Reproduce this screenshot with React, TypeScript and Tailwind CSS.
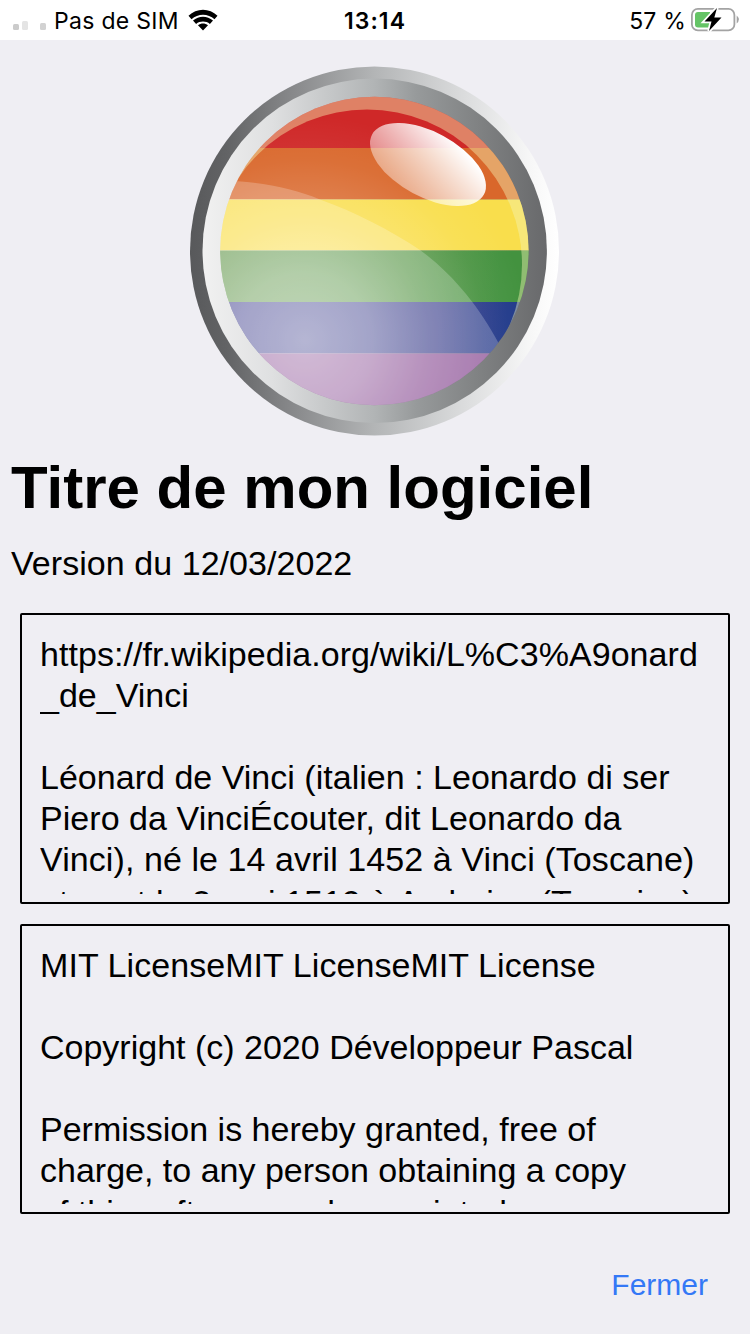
import React from "react";

function Line({ children, className = "" }: { children?: React.ReactNode; className?: string }) {
  return <div className={`h-[41px] whitespace-pre leading-[41px] ${className}`}>{children}</div>;
}

function Logo() {
  return (
    <svg width="372" height="372" viewBox="188 65 372 372" className="block">
      <defs>
        <linearGradient id="outer" x1="0" x2="1" y1="0" y2="0">
          <stop offset="0" stopColor="#58595b" />
          <stop offset="0.1" stopColor="#626365" />
          <stop offset="0.25" stopColor="#828385" />
          <stop offset="0.5" stopColor="#b3b5b6" />
          <stop offset="0.75" stopColor="#dcddde" />
          <stop offset="0.93" stopColor="#f8f8f8" />
          <stop offset="1" stopColor="#ffffff" />
        </linearGradient>
        <linearGradient id="inner" x1="0" x2="1" y1="0" y2="0">
          <stop offset="0" stopColor="#f1f1f1" />
          <stop offset="0.2" stopColor="#dfe0e1" />
          <stop offset="0.5" stopColor="#b1b4b5" />
          <stop offset="0.62" stopColor="#979a9b" />
          <stop offset="0.8" stopColor="#808283" />
          <stop offset="1" stopColor="#68696b" />
        </linearGradient>
        <linearGradient id="green" x1="0" x2="1" y1="0" y2="0">
          <stop offset="0" stopColor="#679a50" />
          <stop offset="0.6" stopColor="#569645" />
          <stop offset="0.9" stopColor="#43923f" />
        </linearGradient>
        <linearGradient id="blue" x1="0" x2="1" y1="0" y2="0">
          <stop offset="0" stopColor="#41408f" />
          <stop offset="0.7" stopColor="#3b3f8c" />
          <stop offset="0.92" stopColor="#213a8a" />
        </linearGradient>
        <radialGradient id="glow" gradientUnits="userSpaceOnUse" cx="305" cy="340" r="225">
          <stop offset="0" stopColor="#fff" stopOpacity="0.51" />
          <stop offset="0.3" stopColor="#fff" stopOpacity="0.39" />
          <stop offset="0.55" stopColor="#fff" stopOpacity="0.2" />
          <stop offset="0.8" stopColor="#fff" stopOpacity="0.06" />
          <stop offset="1" stopColor="#fff" stopOpacity="0" />
        </radialGradient>
        <linearGradient id="shine" gradientUnits="userSpaceOnUse" x1="440" y1="130" x2="415" y2="200">
          <stop offset="0" stopColor="#fff" />
          <stop offset="1" stopColor="#fff" stopOpacity="0.4" />
        </linearGradient>
        <clipPath id="disc"><circle cx="374.4" cy="251" r="154.2" /></clipPath>
        <mask id="rim">
          <rect x="188" y="65" width="372" height="372" fill="#fff" />
          <circle cx="367" cy="264.5" r="155" fill="#000" />
        </mask>
      </defs>
      <circle cx="374.5" cy="251" r="184.5" fill="url(#outer)" />
      <circle cx="374.7" cy="250.8" r="172.2" fill="url(#inner)" />
      <g clipPath="url(#disc)">
        <rect x="218" y="95" width="314" height="53" fill="#cf2828" />
        <rect x="218" y="148" width="314" height="51.5" fill="#d9672b" />
        <rect x="218" y="199.5" width="314" height="51" fill="#f9de4c" />
        <rect x="218" y="250.5" width="314" height="51.5" fill="url(#green)" />
        <rect x="218" y="302" width="314" height="51.5" fill="url(#blue)" />
        <rect x="218" y="353.5" width="314" height="53" fill="#8b4f95" />
        <circle cx="305" cy="340" r="225" fill="url(#glow)" />
        <path d="M210 180 C250 180 290 187 320 199.500 C355 212 390 230 420 250 C452 273 480 308 498 342 L500 440 L200 440 Z" fill="#fff" fillOpacity="0.22" />
        <rect x="218" y="95" width="314" height="314" fill="#f3f3b4" fillOpacity="0.44" mask="url(#rim)" />
      </g>
      <ellipse cx="428" cy="164.500" rx="63.500" ry="32.400" transform="rotate(28.300 428 164.500)" fill="url(#shine)" />
    </svg>
  );
}

export default function App() {
  return (
    <div className="flex h-[1334px] w-[750px] flex-col overflow-hidden bg-[#efeef3] font-['Liberation_Sans',Arial,sans-serif] text-black">
      <header className="grid h-10 shrink-0 grid-cols-3 items-center bg-white font-['Inter',sans-serif] text-[23px]">
        <div className="flex items-center pl-[13px]">
          <svg width="34" height="40" viewBox="0 0 34 40">
            <rect x="0" y="24" width="6" height="6" rx="1.500" fill="#cbcbcb" />
            <rect x="9" y="21" width="6" height="9" rx="1.500" fill="#e4e4e4" />
            <rect x="27" y="23" width="6" height="7" rx="1.500" fill="#d2d2d2" />
          </svg>
          <span className="ml-[7px] whitespace-nowrap pt-[2px] tracking-[0.3px]">Pas de SIM</span>
          <svg width="30" height="22" viewBox="0 0 30 22" className="ml-[9px]">
            <path d="M0.500 6.800 C8.500 -1.200 21.500 -1.200 29.500 6.800 L26.500 10.200 C20 4.200 10 4.200 3.500 10.200 Z M5 11.500 C10.700 6.400 19.300 6.400 25 11.500 L21.900 14.900 C18 11.700 12 11.700 8.100 14.900 Z M10 16.300 C13 13.900 17 13.900 20 16.300 L15 21.500 Z" />
          </svg>
        </div>
        <div className="pt-[2px] text-center font-semibold tracking-[1.1px]">13:14</div>
        <div className="flex items-center justify-end pr-[11px]">
          <span className="whitespace-nowrap pt-[2px] tracking-[0.2px]">57 %</span>
          <svg width="49" height="28" viewBox="690 6 49 28" className="ml-[4px]">
            <rect x="691.900" y="8.900" width="42.500" height="21.500" rx="6" fill="none" stroke="#a3a3a3" strokeWidth="1.800" />
            <path d="M698 12 H710 V27.500 H698 Q695 27.500 695 24.500 V15 Q695 12 698 12 Z" fill="#65c466" />
            <path d="M736.700 15.500 Q741 19.500 736.700 23.500 Z" fill="#a3a3a3" />
            <path d="M717 8 L704.500 21.500 H711.500 L709 31 L721.500 17.500 H714.300 Z" fill="#000" stroke="#fff" strokeWidth="3.500" paintOrder="stroke" />
          </svg>
        </div>
      </header>
      <div className="flex h-[412px] shrink-0 justify-center pt-[25px] pr-[2px]"><Logo /></div>
      <h1 className="mt-px ml-[11px] h-[70px] shrink-0 whitespace-nowrap text-[60px] font-bold leading-[70px]">Titre de mon logiciel</h1>
      <p className="mt-5 ml-[11px] h-[41px] shrink-0 whitespace-nowrap text-[34px] leading-[41px] tracking-[0.05px]">Version du 12/03/2022</p>
      <section className="mx-5 mt-[29px] h-[291px] shrink-0 rounded-[2px] border-2 border-black px-[18px] pt-[19px] pb-[8px] text-[34px]">
        <div className="h-full overflow-hidden">
          <Line className="tracking-[0.05px]">https://fr.wikipedia.org/wiki/L%C3%A9onard</Line>
          <Line>_de_Vinci</Line>
          <Line />
          <Line className="tracking-[0.02px]">Léonard de Vinci (italien : Leonardo di ser</Line>
          <Line className="tracking-[0.05px]">Piero da VinciÉcouter, dit Leonardo da</Line>
          <Line className="tracking-[0.08px]">Vinci), né le 14 avril 1452 à Vinci (Toscane)</Line>
          <Line className="pt-[2px] tracking-[0.08px]">et mort le 2 mai 1519 à Amboise (Touraine)</Line>
        </div>
      </section>
      <section className="mx-5 mt-5 h-[290px] shrink-0 rounded-[2px] border-2 border-black px-[18px] pt-[19px] pb-[8px] text-[34px]">
        <div className="h-full overflow-hidden">
          <Line className="tracking-[0.06px]">MIT LicenseMIT LicenseMIT License</Line>
          <Line />
          <Line>Copyright (c) 2020 Développeur Pascal</Line>
          <Line />
          <Line>Permission is hereby granted, free of</Line>
          <Line>charge, to any person obtaining a copy</Line>
          <Line className="pt-px">of this software and associated</Line>
        </div>
      </section>
      <footer className="mt-[51px] flex justify-end pr-[42px]">
        <button className="h-10 text-[30px] leading-10 text-[#3478f6]">Fermer</button>
      </footer>
    </div>
  );
}
